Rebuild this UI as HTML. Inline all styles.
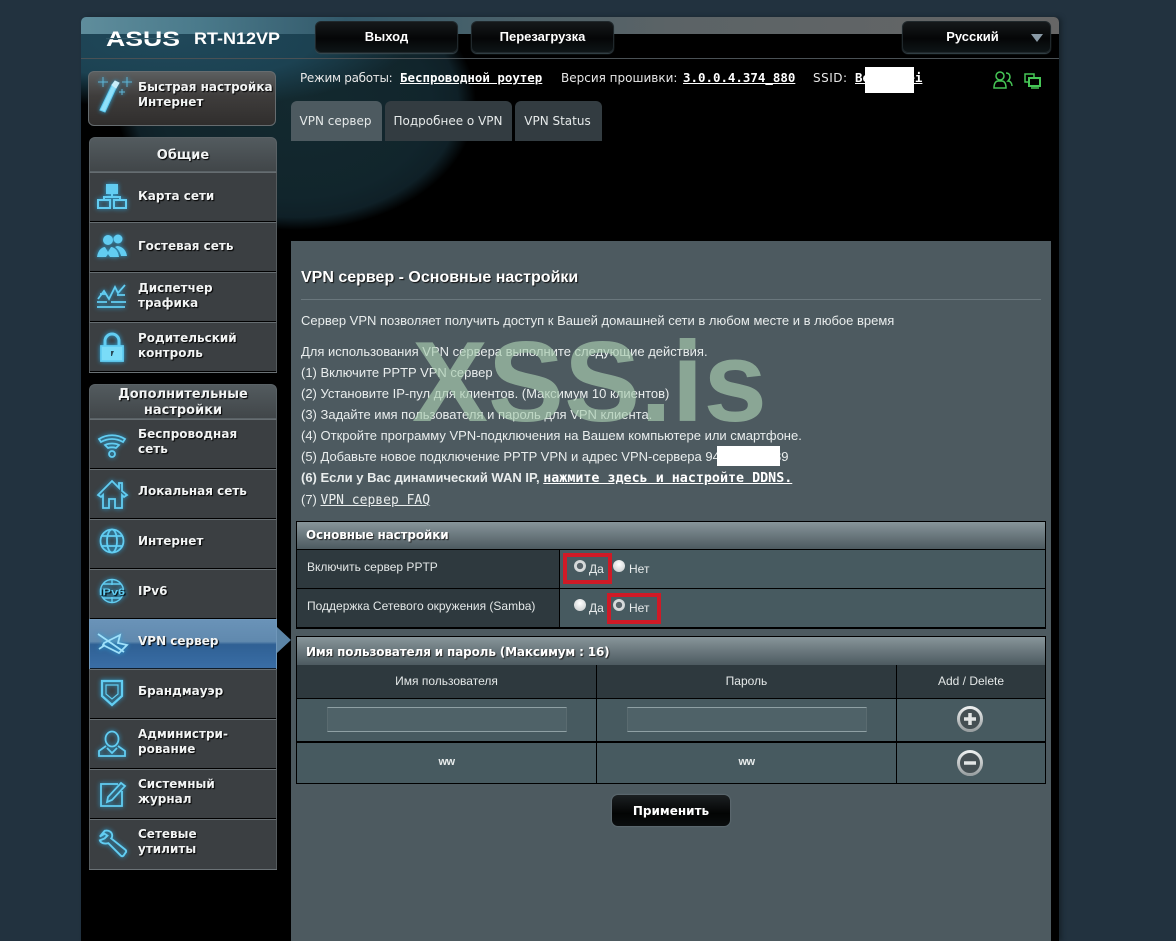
<!DOCTYPE html>
<html lang="ru"><head><meta charset="utf-8"><title>ASUS RT-N12VP</title>
<style>
html,body{margin:0;padding:0;width:1176px;height:941px;overflow:hidden;background:#22323f}
body{position:relative;font-family:"Liberation Sans",sans-serif;color:#e8ecec}
div,a,span,svg{position:absolute;box-sizing:border-box}
#wrap{left:81px;top:17px;width:978px;height:924px;background:#000;border-radius:5px 5px 0 0;box-shadow:3px 0 5px #18242d;overflow:hidden}
#glow{left:0;top:0;width:560px;height:260px;background:radial-gradient(ellipse 240px 70px at 90px 22px,#20485a 0,#1c4252 60%,rgba(20,48,58,0) 100%),radial-gradient(ellipse 180px 128px at 215px 85px,#13292f 0,#11252c 75%,#0f2027 90%,rgba(0,0,0,0) 100%)}
#band{left:0;top:0;width:978px;height:17px;background:linear-gradient(90deg,#5f8d9c 0,#4a7a8b 12%,#33596a 27%,#46606a 40%,#5b6366 60%,#666 100%)}
#hline{left:0;top:41px;width:978px;height:1px;background:#4a5155}
.tbtn{top:21px;height:32px;border-radius:6px;background:linear-gradient(#16191b,#050607 55%,#0e1517);border:1px solid #20282c;box-shadow:0 1px 1px #3a4a50;color:#fff;font:bold 13px/30px "Liberation Sans",sans-serif;text-align:center}
.side{left:89px;width:188px;color:#f2f4f4;font:bold 12px/15px "DejaVu Sans",sans-serif;text-shadow:1px 1px 1px #000}
.item{height:50px;background:#3b3f42;border-top:1px solid #666d71;box-shadow:inset 0 -1px 0 #000;border-right:1px solid #555b5e;border-left:1px solid #555b5e}
.item span{left:48px;top:0;height:48px;display:flex;align-items:center;width:140px;white-space:nowrap}
.g1 span{top:-1px}
.g2 span{top:-2px}
.g3 span{top:-3px}
.item svg{left:6px;top:8px;width:32px;height:32px;fill:none;stroke:#62cdf2;stroke-width:1.8;filter:drop-shadow(0 0 2.5px #2aa6dc);overflow:visible}
.ghead{height:35px;background:linear-gradient(#535b5f,#414649);border-radius:6px 6px 0 0;border:1px solid #5a6266;text-align:center;font-size:13px}
#panel{left:291px;top:241px;width:760px;height:700px;background:#4d5a60}
.tab{top:101px;height:40px;background:#333c41;border-radius:6px 6px 0 0;font:12px/40px "DejaVu Sans",sans-serif;color:#e5e9e9;text-align:center;white-space:nowrap}
.info{top:71px;font:12px/14px "DejaVu Sans",sans-serif;color:#e8e8e8;white-space:nowrap}
.m{top:71px;font:bold 12.45px/14px "DejaVu Sans Mono",monospace;color:#fff;text-decoration:underline;white-space:nowrap}
.t{left:301px;font-size:13px;line-height:16px;color:#e9eded;white-space:nowrap}
.thead{left:297px;width:748px;height:28px;background:linear-gradient(#87959a,#4d5a60);font:bold 12px/30px "DejaVu Sans",sans-serif;color:#fff;padding-left:9px;text-shadow:1px 1px 1px #222;white-space:nowrap;letter-spacing:-.15px}
.b{background:#000}
.lab{background:#2e393e;font-size:12px;color:#e4e8e8;white-space:nowrap}
.val{background:#475a60}
.radio{width:12px;height:12px;border-radius:50%;background:radial-gradient(circle at 50% 35%,#fff,#c2c6c7)}
.radio.on{background:radial-gradient(circle,#59646a 0,#59646a 35%,#dcdfe0 40%,#c2c6c7 100%)}
.rt{font-size:12px;line-height:14px;color:#e8ecec}
.red{border:4px solid #cf1a26}
.inp{height:25px;background:#4f6268;border:1px solid #5a6b70;border-top-color:#8fa0a4;border-bottom-color:#8fa0a4}
</style></head><body>
<div id="wrap"><div id="glow"></div><div id="band"></div><div id="hline"></div></div>

<svg style="left:100px;top:24px;width:190px;height:28px" viewBox="0 0 190 28">
<text x="6" y="22" font-family="Liberation Sans" font-weight="bold" font-size="21" fill="#fff" textLength="74" lengthAdjust="spacingAndGlyphs">ASUS</text>
<rect x="6" y="14" width="74" height="1.200" fill="#2f5665"/>
<text x="94" y="20" font-family="Liberation Sans" font-weight="bold" font-size="17" fill="#fff" textLength="86" lengthAdjust="spacingAndGlyphs">RT-N12VP</text>
</svg>
<div class="tbtn" style="left:315px;width:143px">Выход</div>
<div class="tbtn" style="left:471px;width:143px">Перезагрузка</div>
<div class="tbtn" style="left:902px;width:149px;padding-right:8px">Русский<svg style="left:127px;top:11px;width:14px;height:10px" viewBox="0 0 14 10"><path d="M1 1h12L7 9z" fill="#8a9aa6"/></svg></div>

<!-- quick setup -->
<div style="left:88px;top:71px;width:188px;height:55px;border-radius:6px;background:linear-gradient(#5c5f60,#3f3d3c 45%,#302e2d);border:1px solid #666c6f"></div>
<svg style="left:96px;top:74px;width:38px;height:44px;filter:drop-shadow(0 0 2px #2aa6dc)" viewBox="0 0 38 44" fill="none" stroke="#8fe0fa">
<path d="M4 36l5 2L20 14l-4-3z" fill="#8fe0fa" stroke="#62cdf2"/>
<path d="M16 11l4 3 3-5-4-2z" fill="#c8eefa" stroke="#c8eefa"/>
<path d="M7 3v10M2 8h10M31 3v10M26 8h10M26 15v6M23 18h6" stroke="#5fb4d4"/>
</svg>
<div class="side" style="left:138px;top:80px;width:138px;white-space:nowrap">Быстрая настройка<br>Интернет</div>

<!-- group 1 -->
<div class="side ghead" style="top:137px;line-height:35px">Общие</div>
<div class="side item g1" style="top:172px"><svg viewBox="0 0 32 32" style="stroke-width:2"><path d="M11 4h10v8H11zM2 19h12v8H2zM18 19h12v8H18zM16 12v4M8 19v-3h16v3"/><path d="M12 5h8v6h-8z" fill="#62cdf2"/></svg><span>Карта сети</span></div>
<div class="side item g1" style="top:222px"><svg viewBox="0 0 32 32" style="stroke:none;fill:#62cdf2"><circle cx="12" cy="9" r="5"/><circle cx="22" cy="8" r="4.500"/><path d="M1 26c1-7 5-10 8-10l3 5 3-5c3 0 7 3 8 10H14l-2-3-2 3zM21 15c4 0 9 3 10 10h-6c-1-4-3-7-6-9z"/></svg><span>Гостевая сеть</span></div>
<div class="side item g1" style="top:272px"><svg viewBox="0 0 32 32"><path d="M2 18l6-8 5 8 6-12 3 6 7-8M1 21h10M15 21h15M1 26h28" /><path d="M4 13h6M21 14h8"/></svg><span>Диспетчер<br>трафика</span></div>
<div class="side item g1" style="top:322px"><svg viewBox="0 0 32 32"><path d="M9 15V10a7 7 0 0 1 14 0v5" stroke-width="3"/><path d="M5 15h22v15H5z" fill="#7adcf8"/><path d="M15 20h3l-1 2 -1 3h-1z" fill="#2a4a58" stroke="none"/></svg><span>Родительский<br>контроль</span></div>
<div style="left:89px;top:372px;width:188px;height:1px;background:#6b7276"></div>

<!-- group 2 -->
<div class="side ghead" style="top:384px;height:35px;line-height:16px;padding-top:2px">Дополнительные<br>настройки</div>
<div class="side item g2" style="top:419px"><svg viewBox="0 0 32 32"><path d="M3 11c8-5 18-5 26 0l-2 3c-7-4-15-4-22 0zM9 17c4-2 10-2 14 0l-3 3c-3-1-5-1-8 0z"/><circle cx="16" cy="26" r="3"/></svg><span>Беспроводная<br>сеть</span></div>
<div class="side item g3" style="top:469px"><svg viewBox="0 0 32 32"><path d="M2 17L16 3l7 7V5h3v8l5 4-3 2-2-2v13h-7v-9h-6v9H7V17l-2 2z"/></svg><span>Локальная сеть</span></div>
<div class="side item g3" style="top:519px"><svg viewBox="0 0 32 32"><circle cx="16" cy="13" r="11.500"/><ellipse cx="16" cy="13" rx="5" ry="11.500"/><path d="M5 8h22M5 18h22"/></svg><span>Интернет</span></div>
<div class="side item g3" style="top:569px"><svg viewBox="0 0 32 32" style="stroke-width:1.400"><circle cx="16" cy="13" r="11.500"/><path d="M7 6h18M7 20h18M16 2v5M16 19v5"/><text x="3" y="17" font-size="9.500" font-family="Liberation Sans" fill="#62cdf2" stroke="none" textLength="26" lengthAdjust="spacingAndGlyphs">IPv6</text></svg><span>IPv6</span></div>
<div class="side item g3" style="top:619px;background:linear-gradient(#6a93b8,#6089ae 44%,#2f6094 50%,#3a6ea6 100%);border-color:#6f97ba;box-shadow:inset 0 -1px 0 #101c28"><svg viewBox="0 0 32 32" style="stroke:#9fe0fa"><path d="M2 6l26 18M8 15l16-8-2 8 9 2-8 8-16-8zM3 21l6-4"/></svg><span>VPN сервер</span></div>
<svg style="left:277px;top:627px;width:14px;height:26px" viewBox="0 0 14 26"><path d="M0 0l14 13L0 26z" fill="#5b84a6"/></svg>
<div class="side item g3" style="top:669px"><svg viewBox="0 0 32 32" style="stroke-width:2.200"><path d="M6 3h20v15l-10 9-10-9z"/><path d="M10 7h12v9l-6 5-6-5z" stroke-width="1.200"/></svg><span>Брандмауэр</span></div>
<div class="side item g2" style="top:719px"><svg viewBox="0 0 32 32"><ellipse cx="16" cy="11" rx="6.500" ry="7.500"/><path d="M10 18l-7 5v5h26v-5l-7-5M11 20l5 5 5-5"/></svg><span>Администри-<br>рование</span></div>
<div class="side item g2" style="top:769px"><svg viewBox="0 0 32 32"><path d="M26 13v15H5V6h17"/><path d="M11 24l1-5L25 5l4 3-13 14z"/></svg><span>Системный<br>журнал</span></div>
<div class="side item g2" style="top:819px;height:51px"><svg viewBox="0 0 32 32" style="stroke-width:2"><path d="M3 9l5-6c4-1 8 1 8 5 0 1 0 2-1 3l15 12c1 1 1 2 0 3l-2 3c-1 1-2 1-3 0L12 16c-4 1-8 0-9-3l5-2 3-3-3-2z" transform="translate(1 0) scale(.95)"/></svg><span>Сетевые<br>утилиты</span></div>
<div style="left:89px;top:869px;width:188px;height:1px;background:#6b7276"></div>

<!-- info -->
<div class="info" style="left:300px;letter-spacing:-.3px">Режим работы:</div><div class="m" style="left:400px">Беспроводной роутер</div>
<div class="info" style="left:561px">Версия прошивки:</div><div class="m" style="left:683px">3.0.0.4.374_880</div>
<div class="info" style="left:813px;letter-spacing:.5px">SSID:</div><div class="m" style="left:855px">Beeeeeeei</div>
<div style="left:865px;top:67px;width:49px;height:26px;background:#fff"></div>
<svg style="left:992px;top:70px;width:22px;height:20px" viewBox="0 0 22 20" fill="none" stroke="#46c656" stroke-width="1.500"><circle cx="8" cy="6" r="4"/><path d="M2 18c0-5 2-7 4-7h4c2 0 4 2 4 7zM14 3c3 0 4 2 4 4s-1 3-2 4c2 0 4 2 4 5" /></svg>
<svg style="left:1023px;top:72px;width:20px;height:18px" viewBox="0 0 20 18" fill="none" stroke="#46c656" stroke-width="1.500"><path d="M5 10H2V2h9v3"/><path d="M6 6h11v8H6z" stroke-width="2"/><path d="M8 16h8"/></svg>

<!-- tabs -->
<div class="tab" style="left:291px;width:91px;background:#4d5a60;padding-right:2px">VPN сервер</div>
<div class="tab" style="left:385px;width:127px;padding-right:1px">Подробнее о VPN</div>
<div class="tab" style="left:515px;width:87px;padding-right:2px">VPN Status</div>

<div id="panel"></div>
<div style="left:301px;top:268px;font:bold 16px/20px 'Liberation Sans',sans-serif;color:#fff;text-shadow:1px 1px 1px #111;white-space:nowrap">VPN сервер - Основные настройки</div>
<div style="left:301px;top:299px;width:740px;height:1px;background:#6a777d"></div>
<div class="t" style="top:313px">Сервер VPN позволяет получить доступ к Вашей домашней сети в любом месте и в любое время</div>
<div class="t" style="top:344px">Для использования VPN сервера выполните следующие действия.</div>
<div class="t" style="top:365px">(1) Включите PPTP VPN сервер</div>
<div class="t" style="top:386px">(2) Установите IP-пул для клиентов. (Максимум 10 клиентов)</div>
<div class="t" style="top:407px">(3) Задайте имя пользователя и пароль для VPN клиента.</div>
<div style="left:412px;top:318px;font:bold 114px/130px 'Liberation Sans',sans-serif;color:rgba(168,205,176,.67);white-space:nowrap">XSS.is</div>
<div class="t" style="top:428px">(4) Откройте программу VPN-подключения на Вашем компьютере или смартфоне.</div>
<div class="t" style="top:449px">(5) Добавьте новое подключение PPTP VPN и адрес VPN-сервера 94.000.000.89</div>
<div style="left:717px;top:446px;width:63px;height:20px;background:#fff"></div>
<div class="t" style="top:470px;font-weight:bold">(6) Если у Вас динамический WAN IP, <span style="position:static;font:bold 13.35px/16px 'DejaVu Sans Mono',monospace;text-decoration:underline;color:#fff">нажмите здесь и настройте DDNS.</span></div>
<div class="t" style="top:492px">(7) <span style="position:static;font:13px/16px 'DejaVu Sans Mono',monospace;text-decoration:underline">VPN сервер FAQ</span></div>

<!-- table 1 -->
<div class="b" style="left:296px;top:521px;width:750px;height:108px"></div>
<div class="thead" style="top:522px;height:27px;line-height:27px">Основные настройки</div>
<div class="lab" style="left:297px;top:550px;width:262px;height:38px;padding:0 0 0 10px;line-height:35px"><span style="position:static">Включить сервер PPTP</span></div>
<div class="val" style="left:560px;top:550px;width:485px;height:38px"></div>
<div class="lab" style="left:297px;top:589px;width:262px;height:38px;padding-left:10px;line-height:35px"><span style="position:static">Поддержка Сетевого окружения (Samba)</span></div>
<div class="val" style="left:560px;top:589px;width:485px;height:38px"></div>
<div class="radio on" style="left:574px;top:560px"></div><div class="rt" style="left:589px;top:562px">Да</div>
<div class="radio" style="left:613px;top:560px"></div><div class="rt" style="left:629px;top:562px">Нет</div>
<div class="radio" style="left:574px;top:599px"></div><div class="rt" style="left:589px;top:601px">Да</div>
<div class="radio on" style="left:613px;top:599px"></div><div class="rt" style="left:629px;top:601px">Нет</div>
<div class="red" style="left:563px;top:553px;width:49px;height:31px"></div>
<div class="red" style="left:607px;top:593px;width:54px;height:31px"></div>

<!-- table 2 -->
<div class="b" style="left:296px;top:636px;width:750px;height:148px"></div>
<div class="thead" style="top:637px;height:28px">Имя пользователя и пароль (Максимум : 16)</div>
<div class="lab" style="left:297px;top:665px;width:299px;height:33px;text-align:center;line-height:32px">Имя пользователя</div>
<div class="lab" style="left:597px;top:665px;width:299px;height:33px;text-align:center;line-height:32px">Пароль</div>
<div class="lab" style="left:897px;top:665px;width:148px;height:33px;text-align:center;line-height:32px">Add / Delete</div>
<div class="val" style="left:297px;top:699px;width:299px;height:42px"></div>
<div class="val" style="left:597px;top:699px;width:299px;height:42px"></div>
<div class="val" style="left:897px;top:699px;width:148px;height:42px"></div>
<div class="inp" style="left:327px;top:707px;width:240px"></div>
<div class="inp" style="left:627px;top:707px;width:240px"></div>
<div class="val" style="left:297px;top:743px;width:299px;height:40px;text-align:center;font-size:11px;line-height:38px;font-weight:bold;letter-spacing:-.5px">ww</div>
<div class="val" style="left:597px;top:743px;width:299px;height:40px;text-align:center;font-size:11px;line-height:38px;font-weight:bold;letter-spacing:-.5px">ww</div>
<div class="val" style="left:897px;top:743px;width:148px;height:40px"></div>
<svg style="left:956px;top:705px;width:28px;height:28px" viewBox="0 0 28 28"><defs><linearGradient id="ring" x1="0" y1="0" x2="0" y2="1"><stop offset="0" stop-color="#eceeee"/><stop offset="1" stop-color="#9aa0a2"/></linearGradient></defs><circle cx="14" cy="14" r="11.500" fill="#454f53" stroke="url(#ring)" stroke-width="3"/><path d="M14 8v12M8 14h12" stroke="#e3e5e5" stroke-width="3.500"/></svg>
<svg style="left:956px;top:749px;width:28px;height:28px" viewBox="0 0 28 28"><circle cx="14" cy="14" r="11.500" fill="#454f53" stroke="url(#ring)" stroke-width="3"/><path d="M8 14h12" stroke="#e3e5e5" stroke-width="3.500"/></svg>

<div style="left:612px;top:795px;width:118px;height:31px;border-radius:6px;background:linear-gradient(#1c2022,#030404 60%,#0a0d0e);box-shadow:0 0 1px 1px #5d6a70;color:#fff;font:bold 12px/32px 'DejaVu Sans',sans-serif;text-align:center">Применить</div>
</body></html>
